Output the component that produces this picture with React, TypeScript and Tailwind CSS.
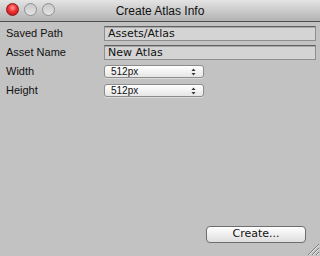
function Arrows() {
  return (
    <svg width="5" height="8" viewBox="0 0 5 8" className="text-[#333]">
      <path d="M2.5 0.5 L4.5 3 L0.5 3 Z" fill="currentColor" />
      <path d="M2.5 7.5 L4.5 5 L0.5 5 Z" fill="currentColor" />
    </svg>
  );
}

function Dropdown({ value }: { value: string }) {
  return (
    <div className="flex h-[13px] w-[100px] items-center justify-between rounded-[3px] border border-[#8c8c8c] bg-gradient-to-b from-white to-[#e6e6e6] pl-[6px] pr-[7px] shadow-[0_1px_0_rgba(255,255,255,0.4)]">
      <span className="font-['Liberation_Sans',sans-serif] text-[10px] leading-none text-[#111]">{value}</span>
      <Arrows />
    </div>
  );
}

function TextField({ value }: { value: string }) {
  return (
    <div className="flex h-[15px] w-[212px] items-center border border-[#8e8e8e] border-t-[#5f5f5f] bg-[#d4d4d4] pl-[3px] shadow-[inset_0_1px_0_#a8a8a8]">
      <span className="text-[11px] leading-none text-[#111]">{value}</span>
    </div>
  );
}

function Label({ text }: { text: string }) {
  return (
    <span className="w-[98px] font-['Liberation_Sans',sans-serif] text-[11px] leading-none text-[#111]">
      {text}
    </span>
  );
}

export default function App() {
  return (
    <div
      className="relative flex h-[256px] w-[320px] flex-col overflow-hidden bg-[#c2c2c2]"
      style={{ fontFamily: '"DejaVu Sans", "Liberation Sans", sans-serif' }}
    >
      <div className="relative flex h-[22px] shrink-0 items-center justify-center border-b border-[#4e4e4e] bg-gradient-to-b from-[#e4e4e4] to-[#b3b3b3]">
        <div className="absolute left-[6px] top-[3px] flex gap-[5px]">
          <div className="h-[13px] w-[13px] rounded-full border border-[#8a1a1a] bg-[radial-gradient(circle_at_50%_35%,#ff9a9a_0%,#f03030_45%,#b01010_100%)]" />
          <div className="h-[13px] w-[13px] rounded-full border border-[#8f8f8f] bg-gradient-to-b from-[#c8c8c8] to-[#e4e4e4]" />
          <div className="h-[13px] w-[13px] rounded-full border border-[#8f8f8f] bg-gradient-to-b from-[#c8c8c8] to-[#e4e4e4]" />
        </div>
        <span className="font-['Liberation_Sans',sans-serif] text-[12px] text-[#111]">Create Atlas Info</span>
      </div>

      <div className="flex flex-col pl-[6px] pt-[4px]">
        <div className="flex h-[15px] items-center">
          <Label text="Saved Path" />
          <TextField value="Assets/Atlas" />
        </div>
        <div className="mt-[4px] flex h-[15px] items-center">
          <Label text="Asset Name" />
          <TextField value="New Atlas" />
        </div>
        <div className="mt-[5px] flex h-[13px] items-center">
          <Label text="Width" />
          <Dropdown value="512px" />
        </div>
        <div className="mt-[6px] flex h-[13px] items-center">
          <Label text="Height" />
          <Dropdown value="512px" />
        </div>
      </div>

      <div className="flex-1" />

      <div className="flex justify-end pb-[13px] pr-[14px]">
        <button className="flex h-[17px] w-[100px] items-center justify-center rounded-[4px] border border-[#6e6e6e] bg-gradient-to-b from-white to-[#dedede] text-[11px] text-[#111]">
          Create...
        </button>
      </div>

      <svg className="absolute bottom-0 right-0" width="16" height="16" viewBox="0 0 16 16">
        <path d="M15 4 L4 15 M15 8 L8 15 M15 12 L12 15" stroke="#7a7a7a" strokeWidth="1" />
        <path d="M15 5 L5 15 M15 9 L9 15 M15 13 L13 15" stroke="#e8e8e8" strokeWidth="1" />
      </svg>
    </div>
  );
}
